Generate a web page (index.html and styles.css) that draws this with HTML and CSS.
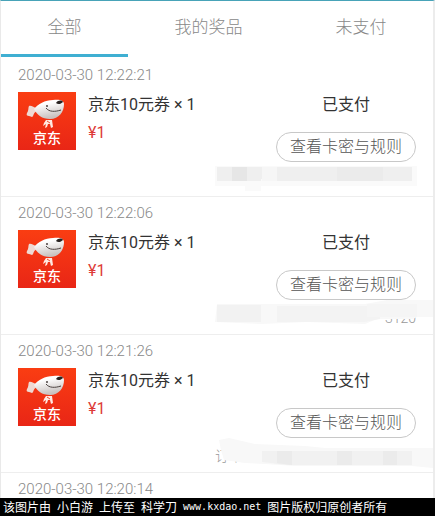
FILE: index.html
```html
<!DOCTYPE html>
<html lang="zh-CN">
<head>
<meta charset="utf-8">
<meta name="viewport" content="width=device-width, initial-scale=1">
<title>全部</title>
<link rel="stylesheet" href="styles.css">
</head>
<body>
<svg class="defs" aria-hidden="true">
  <defs>
    <linearGradient id="red" x1="0" y1="0" x2="0" y2="1"><stop offset="0" stop-color="#fa3d12"/><stop offset="1" stop-color="#e92616"/></linearGradient>
    <linearGradient id="silver" x1="0" y1="0" x2="0.3" y2="1"><stop offset="0.3" stop-color="#ffffff"/><stop offset="1" stop-color="#c9c2c0"/></linearGradient>
    <symbol id="jd" viewBox="0 0 58 58">
      <rect width="58" height="58" fill="url(#red)"/>
      <path d="M18 16C15 15 13 13 11 14C10 16 11 18 9 21C8 23 9 24 11 24C13 24 14 26 15 24C16 23 15 21 19 19Z" fill="#efd9d3"/>
      <path d="M16 17C20 12 27 8 35 8C41 7 46 8 46 12C46 20 41 27 32 27C24 27 19 23 16 17Z" fill="url(#silver)"/>
      <path d="M38 11C40 8 44 8 45 10C43 12 40 13 38 11Z" fill="#292321"/>
      <path d="M28 16C31 20 37 20 43 18" fill="none" stroke="#4b4240" stroke-width="1"/>
      <circle cx="29" cy="14" r="1" fill="#4b4240"/>
      <path d="M28 28L34 28L35 35L33 36L32 32L30 32L29 35L27 36L28 32L25 34L26 31Z" fill="#ffe9e2"/>
      <path d="M29 29L32 31" stroke="#f04a30" stroke-width="1"/>
      <text x="29" y="51" class="logo-text">京东</text>
    </symbol>
  </defs>
</svg>
<div class="app">
  <nav class="tabs">
    <a class="tab active" href="#all">全部</a>
    <a class="tab" href="#prizes">我的奖品</a>
    <a class="tab" href="#unpaid">未支付</a>
  </nav>
  <main class="orders" id="all">
    <article class="order">
      <time class="date">2020-03-30 12:22:21</time>
      <div class="row">
        <svg class="logo" role="img" aria-label="京东"><use href="#jd"/></svg>
        <div class="info"><h2 class="title">京东10元券 × 1</h2><p class="price">¥1</p></div>
        <div class="side"><p class="status">已支付</p><button class="view" type="button">查看卡密与规则</button></div>
      </div>
      <svg class="mask" viewBox="0 0 218 34" aria-hidden="true">
        <path d="M0 4H202V24H46V29H30V24H0Z" fill="#fafafa"/>
        <path d="M2 5H197V19H62V17H46V19H2Z" fill="#efefef"/>
        <path d="M17 5H32V19H17Z" fill="#e6e6e6"/>
        <path d="M47 5H62V19H47Z" fill="#f6f6f6"/>
        <path d="M122 5H168V19H122Z" fill="#ebebeb"/>
      </svg>
    </article>
    <article class="order">
      <time class="date">2020-03-30 12:22:06</time>
      <div class="row">
        <svg class="logo" role="img" aria-label="京东"><use href="#jd"/></svg>
        <div class="info"><h2 class="title">京东10元券 × 1</h2><p class="price">¥1</p></div>
        <div class="side"><p class="status">已支付</p><button class="view" type="button">查看卡密与规则</button></div>
      </div>
      <p class="number">3120</p>
      <svg class="mask" viewBox="0 0 218 34" aria-hidden="true">
        <path d="M2 4H150L172 0H218V17H202L198 19L162 19L150 24L92 22L46 24L0 22Z" fill="#f8f8f8"/>
        <path d="M2 5H46V22H2Z" fill="#f2f2f2"/>
        <path d="M62 6H165V19L150 22H62Z" fill="#f3f3f3"/>
        <path d="M152 4H202V17H152Z" fill="#f5f5f5"/>
      </svg>
    </article>
    <article class="order">
      <time class="date">2020-03-30 12:21:26</time>
      <div class="row">
        <svg class="logo" role="img" aria-label="京东"><use href="#jd"/></svg>
        <div class="info"><h2 class="title">京东10元券 × 1</h2><p class="price">¥1</p></div>
        <div class="side"><p class="status">已支付</p><button class="view" type="button">查看卡密与规则</button></div>
      </div>
      <p class="number start">订单</p>
      <svg class="mask" viewBox="0 0 218 34" aria-hidden="true">
        <path d="M4 2L14 0L40 6L90 8L110 10H218V30L197 28H80L50 26L30 25L9 22L6 12Z" fill="#f8f8f8"/>
        <path d="M47 13H197V27H72L47 24Z" fill="#f1f1f1"/>
        <path d="M62 13H77V27L62 25ZM122 13H137V27H122ZM168 13H182V27H168Z" fill="#ebebeb"/>
      </svg>
    </article>
    <article class="order">
      <time class="date">2020-03-30 12:20:14</time>
    </article>
  </main>
</div>
<footer class="credit">
  <span>该图片由</span>
  <span>小白游</span>
  <span>上传至</span>
  <span>科学刀</span>
  <span class="site">www.kxdao.net</span>
  <span>图片版权归原创者所有</span>
</footer>
</body>
</html>
```
FILE: styles.css
```css
* { box-sizing: border-box; }
body {
  margin: 0;
  height: 100vh;
  display: flex;
  flex-direction: column;
  background: #fff;
  color: #333;
  font-family: Roboto, "Noto Sans CJK SC", sans-serif;
  font-size: 16px;
  font-weight: 300;
}
h2, p { margin: 0; font-size: 16px; }
.defs { position: absolute; width: 0; height: 0; }
.app {
  flex: 1;
  min-height: 0;
  overflow: hidden;
  border-top: 1px solid #48a3b8;
  border-left: 1px solid #e9e9e9;
  border-right: 2px solid #ececec;
}
.tabs { display: flex; padding-bottom: 2px; }
.tab {
  flex: 1 1 auto;
  padding: 12px 0 13px;
  border-bottom: 3px solid transparent;
  color: #888;
  font-size: 17px;
  line-height: 28px;
  text-align: center;
  text-decoration: none;
}
.tab.active { border-color: #3fafd2; }
.order {
  position: relative;
  height: 138px;
  padding: 6px 17px 0;
  border-bottom: 1px solid #eee;
}
.date {
  display: block;
  color: #888;
  font-size: 15px;
  line-height: 20px;
}
.row { display: flex; margin-top: 7px; }
.logo { width: 58px; height: 58px; flex: none; }
.logo-text {
  fill: #fff;
  font-size: 14px;
  font-weight: 500;
  text-anchor: middle;
}
.info { flex: 1; padding-left: 12px; }
.title, .price, .status { line-height: 26px; font-weight: 400; }
.price { margin-top: 2px; color: #dd3b38; }
.side { text-align: center; }
.view {
  display: block;
  height: 30px;
  margin-top: 14px;
  padding: 0 13px;
  border: 1px solid #c8c8c8;
  border-radius: 15px;
  background: #fff;
  color: #555;
  font: inherit;
  line-height: 26px;
}
.number {
  position: absolute;
  right: 17px;
  bottom: 6px;
  color: #999;
  font-size: 14px;
  line-height: 20px;
}
.number.start { right: auto; left: calc(100% - 218px); }
.mask {
  position: absolute;
  right: 0;
  bottom: 0;
  width: 218px;
  height: 34px;
}
.credit {
  display: flex;
  gap: 6px;
  padding-left: 3px;
  overflow: hidden;
  background: #000;
  color: #fff;
  font-family: "Noto Sans CJK SC", sans-serif;
  font-size: 12px;
  font-weight: 400;
  line-height: 18px;
  white-space: nowrap;
}
.site {
  font-family: "DejaVu Sans Mono", monospace;
  font-size: 10px;
}
```
